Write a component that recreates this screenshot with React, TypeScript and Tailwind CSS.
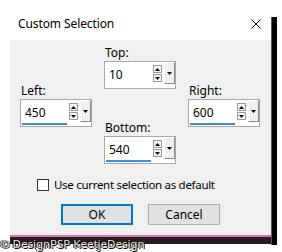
import React from 'react'

const font = { fontFamily: '"Noto Sans", "Open Sans", sans-serif' }

// tiny triangle used in the spin and drop buttons
const Tri = ({ up = false }: { up?: boolean }) => (
  <svg viewBox="0 0 5 3" className="h-[3px] w-[5px]" aria-hidden>
    <path d={up ? 'M0 3h5L2.5 0z' : 'M0 0h5L2.5 3z'} fill="#000" />
  </svg>
)

const SpinField = ({ value, underline = true }: { value: string; underline?: boolean }) => (
  <div className="flex h-[28px] w-[72px] border border-[#a9a9a9] bg-white">
    <div className="relative flex flex-1 items-center pl-[4px] text-[12px] text-black">
      {value}
      {underline && <div className="absolute bottom-[1px] left-[1px] right-[2px] h-[2px] bg-[#3c8fdc]" />}
    </div>
    <div className="mt-[3px] flex w-[9px] flex-col gap-[1px]">
      <div className="flex h-[8px] items-center justify-center border border-[#9a9a9a] bg-[#f4f4f4]">
        <Tri up />
      </div>
      <div className="flex h-[8px] items-center justify-center border border-[#9a9a9a] bg-[#f4f4f4]">
        <Tri />
      </div>
    </div>
    <div className="ml-[2px] flex h-[22px] w-[11px] items-center justify-center border border-t-white border-l-white border-r-[#8a8a8a] border-b-[#8a8a8a] bg-[#f0f0f0]">
      <Tri />
    </div>
  </div>
)

const Label = ({ children }: { children: React.ReactNode }) => (
  <div className="h-[16px] pl-[1px] text-[12px] leading-[16px] text-black">{children}</div>
)

export default function App() {
  return (
    <div className="relative h-[252px] w-[282px] overflow-hidden bg-white" style={font}>
      <div className="flex">
        {/* dialog */}
        <div className="flex w-[271px] flex-col">
          <div className="flex h-[40px] items-center justify-between pl-[18px] pr-[10px] pt-[8px]">
            <span className="text-[12px] tracking-[-0.1px] text-black">Custom Selection</span>
            <svg viewBox="0 0 10 10" className="h-[10px] w-[10px]" aria-hidden>
              <path d="M0.5 0.5l9 9M9.5 0.5l-9 9" stroke="#000" strokeWidth="1" />
            </svg>
          </div>
          <div className="ml-[10px] flex h-[195px] flex-col bg-[#f0f0f0]">
            <div className="grid grid-cols-[72px_72px_72px] gap-x-[12px] pl-[10px]">
              <div className="pt-[43px]">
                <Label>Left:</Label>
                <SpinField value="450" />
              </div>
              <div className="pt-[5px]">
                <Label>Top:</Label>
                <SpinField value="10" underline={false} />
                <div className="mt-[31px]">
                  <Label>Bottom:</Label>
                  <SpinField value="540" />
                </div>
              </div>
              <div className="pt-[43px]">
                <Label>Right:</Label>
                <SpinField value="600" />
              </div>
            </div>
            <div className="mt-[12px] flex h-[17px] items-center gap-[5px] pl-[27px]">
              <div className="h-[12px] w-[12px] border border-[#333] bg-white" />
              <span className="text-[11.5px] tracking-[-0.3px] text-black">Use current selection as default</span>
            </div>
            <div className="mt-[11px] flex gap-[15px] pl-[51px]">
              <button className="h-[21px] w-[72px] border-2 border-[#0078d7] bg-[#e1e1e1] text-[12px] text-black">
                OK
              </button>
              <button className="h-[21px] w-[72px] border border-[#adadad] bg-[#e1e1e1] text-[12px] text-black">
                Cancel
              </button>
            </div>
          </div>
          <div className="ml-[10px] h-[2px] bg-[#d77aa8]" />
          <div className="ml-[10px] h-[7px] bg-[#2a1a22]" />
        </div>
        {/* shadow of the window behind */}
        <div className="mt-[17px] h-[228px] w-[6px] border-l border-[#555] bg-black" />
      </div>
      <div
        className="absolute bottom-[2px] left-[0px] text-[11.5px] leading-[12px] text-[#ececec]"
        style={{ textShadow: '0 0 1px #000, 1px 1px 0 #000, -1px 0 0 #000' }}
      >
        © DesignPSP KeetjeDesign
      </div>
    </div>
  )
}
